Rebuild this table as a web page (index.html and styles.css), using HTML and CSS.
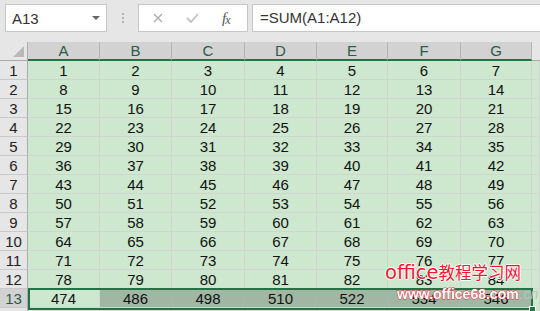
FILE: index.html
```html
<!DOCTYPE html>
<html lang="zh-CN">
<head>
<meta charset="utf-8">
<title>SUM</title>
<link rel="stylesheet" href="styles.css">
</head>
<body>
<div class="toolbar">
  <div class="namebox">
    <span class="name">A13</span>
    <span class="caret"></span>
  </div>
  <div class="grip"><i></i><i></i><i></i></div>
  <div class="fxbtns">
    <svg class="btn-x" width="10" height="10" viewBox="0 0 10 10"><path d="M1 1L9 9M9 1L1 9" stroke="#adadad" stroke-width="1.4" fill="none"/></svg>
    <svg class="btn-ok" width="13" height="10" viewBox="0 0 13 10"><path d="M1 5L5 9L12 1" stroke="#c2c2c2" stroke-width="1.8" fill="none"/></svg>
    <span class="fx">f<span class="fx-x">x</span></span>
  </div>
  <div class="formula">=SUM(A1:A12)</div>
</div>

<div class="sheet">
  <div class="grid" id="grid"></div>
  <div class="selection"><span class="handle"></span></div>
  <div class="mark">
    <div class="mark-title">office<span class="cjk">教程学习网</span></div>
    <div class="mark-url">www.office68.com<span class="mark-cn">.cn</span></div>
  </div>
</div>

<script src="app.js"></script>
</body>
</html>
```

FILE: app.js
```js
// Build the worksheet: column headers, 13 numbered rows and the top of row 14.
(function () {
  var grid = document.getElementById('grid');
  var cols = ['A', 'B', 'C', 'D', 'E', 'F', 'G'];

  function cell(cls, text) {
    var d = document.createElement('div');
    d.className = cls;
    if (text !== undefined) d.textContent = text;
    grid.appendChild(d);
  }

  // header row
  cell('corner');
  cols.forEach(function (c) { cell('colhead', c); });
  cell('colhead colhead-off');

  // data rows 1..12: value = 7*(row-1)+col
  for (var r = 1; r <= 12; r++) {
    cell('rowhead', String(r));
    for (var c = 1; c <= 7; c++) cell('c', String(7 * (r - 1) + c));
    cell('c');
  }

  // totals row
  cell('rowhead rowhead-on', '13');
  for (var k = 1; k <= 7; k++) {
    cell(k === 1 ? 'c' : 'c c-sel', String(462 + 12 * k));
  }
  cell('c');

  // top edge of row 14
  cell('rowhead');
  for (var m = 0; m < 8; m++) cell('c');
})();
```

FILE: styles.css
```css
* { box-sizing: border-box; }

html, body {
  margin: 0;
  padding: 0;
}

body {
  width: 540px;
  height: 311px;
  overflow: hidden;
  background: #e6e6e6;
  font-family: "Liberation Sans", Arial, sans-serif;
  color: #111;
}

/* ---------- formula toolbar ---------- */
.toolbar {
  display: flex;
  align-items: flex-start;
  height: 42px;
  padding: 4px 0 0 5px;
}

.namebox {
  position: relative;
  width: 102px;
  height: 28px;
  background: #fff;
  border: 1px solid #c6c6c6;
  display: flex;
  align-items: center;
  padding-left: 6px;
}

.name {
  font-size: 15px;
  color: #333;
}

.caret {
  margin-left: auto;
  margin-right: 6px;
  width: 0;
  height: 0;
  border-left: 4px solid transparent;
  border-right: 4px solid transparent;
  border-top: 4px solid #666;
}

.grip {
  width: 31px;
  height: 28px;
  display: flex;
  flex-direction: column;
  align-items: center;
  justify-content: center;
  gap: 2px;
}

.grip i {
  display: block;
  width: 2px;
  height: 2px;
  background: #b4b4b4;
}

.fxbtns {
  width: 110px;
  height: 28px;
  background: #fff;
  border: 1px solid #c6c6c6;
  display: flex;
  align-items: center;
  padding-left: 14px;
}

.btn-x { margin-right: 23px; }
.btn-ok { margin-right: 23px; }

.fx {
  font-family: "Liberation Serif", "Times New Roman", serif;
  font-style: italic;
  font-size: 15px;
  color: #555;
  letter-spacing: -1px;
}

.fx-x {
  font-size: 12px;
  position: relative;
  top: 1px;
}

.formula {
  margin-left: 4px;
  flex: 1;
  height: 28px;
  background: #fff;
  border: 1px solid #c6c6c6;
  border-right: none;
  font-size: 15px;
  color: #333;
  padding-left: 7px;
  line-height: 26px;
}

/* ---------- worksheet ---------- */
.sheet {
  position: relative;
  height: 269px;
  overflow: hidden;
}

.grid {
  display: grid;
  grid-template-columns: 28px 72px 72px 73px 72px 71px 73px 71px 1fr;
  grid-auto-rows: 19px;
}

.corner {
  position: relative;
  background: #e6e6e6;
  border-right: 1px solid #ababab;
  border-bottom: 1px solid #ababab;
}

.corner::after {
  content: "";
  position: absolute;
  right: 3px;
  bottom: 3px;
  width: 0;
  height: 0;
  border-left: 11px solid transparent;
  border-bottom: 11px solid #b9b9b9;
}

.colhead {
  background: #d2d2d2;
  border-right: 1px solid #b6b6b6;
  border-bottom: 2px solid #217346;
  text-align: center;
  font-size: 15px;
  line-height: 17px;
  color: #2c5a46;
}

.colhead-off {
  background: #e6e6e6;
  border-bottom: 1px solid #ababab;
  border-right: none;
}

.rowhead {
  background: #e6e6e6;
  border-right: 1px solid #ababab;
  border-bottom: 1px solid #c9c9c9;
  text-align: center;
  font-size: 15px;
  line-height: 20px;
  color: #222;
}

.rowhead-on {
  background: #d2d2d2;
  color: #2c5a46;
}

.c {
  background: #cde8cf;
  border-right: 1px solid #d1d6d1;
  border-bottom: 1px solid #d1d6d1;
  text-align: center;
  font-size: 15px;
  line-height: 20px;
  color: #111;
}

.c-sel {
  background: #a1b7a3;
  border-right-color: #a9b4aa;
}

/* selected range A13:G13 */
.selection {
  position: absolute;
  left: 28px;
  top: 246px;
  width: 505px;
  height: 22px;
  border: 2px solid #217346;
  pointer-events: none;
}

.handle {
  position: absolute;
  right: -5px;
  bottom: -5px;
  width: 7px;
  height: 7px;
  background: #217346;
  border: 1px solid #fff;
}

/* site stamp in the lower right corner */
.mark {
  position: absolute;
  left: 385px;
  top: 218px;
  pointer-events: none;
}

.mark-title {
  font-family: "DejaVu Sans", sans-serif;
  font-size: 19.5px;
  line-height: 24px;
  color: #f3172f;
  text-shadow: 1px 0 0 #fff, -1px 0 0 #fff, 0 1px 0 #fff, 0 -1px 0 #fff;
  white-space: nowrap;
}

.cjk {
  font-family: "Noto Sans CJK SC", sans-serif;
  font-size: 16.5px;
}

.mark-url {
  margin: 1px 0 0 12px;
  font-family: "Liberation Sans", Arial, sans-serif;
  font-weight: bold;
  font-size: 14px;
  line-height: 16px;
  color: #fff;
  -webkit-text-stroke: 0.9px #ec1730;
  paint-order: stroke fill;
  white-space: nowrap;
}

.mark-cn {
  margin-left: 1px;
  font-style: italic;
  font-weight: normal;
  color: #b9c4ba;
  -webkit-text-stroke: 0;
}
```
